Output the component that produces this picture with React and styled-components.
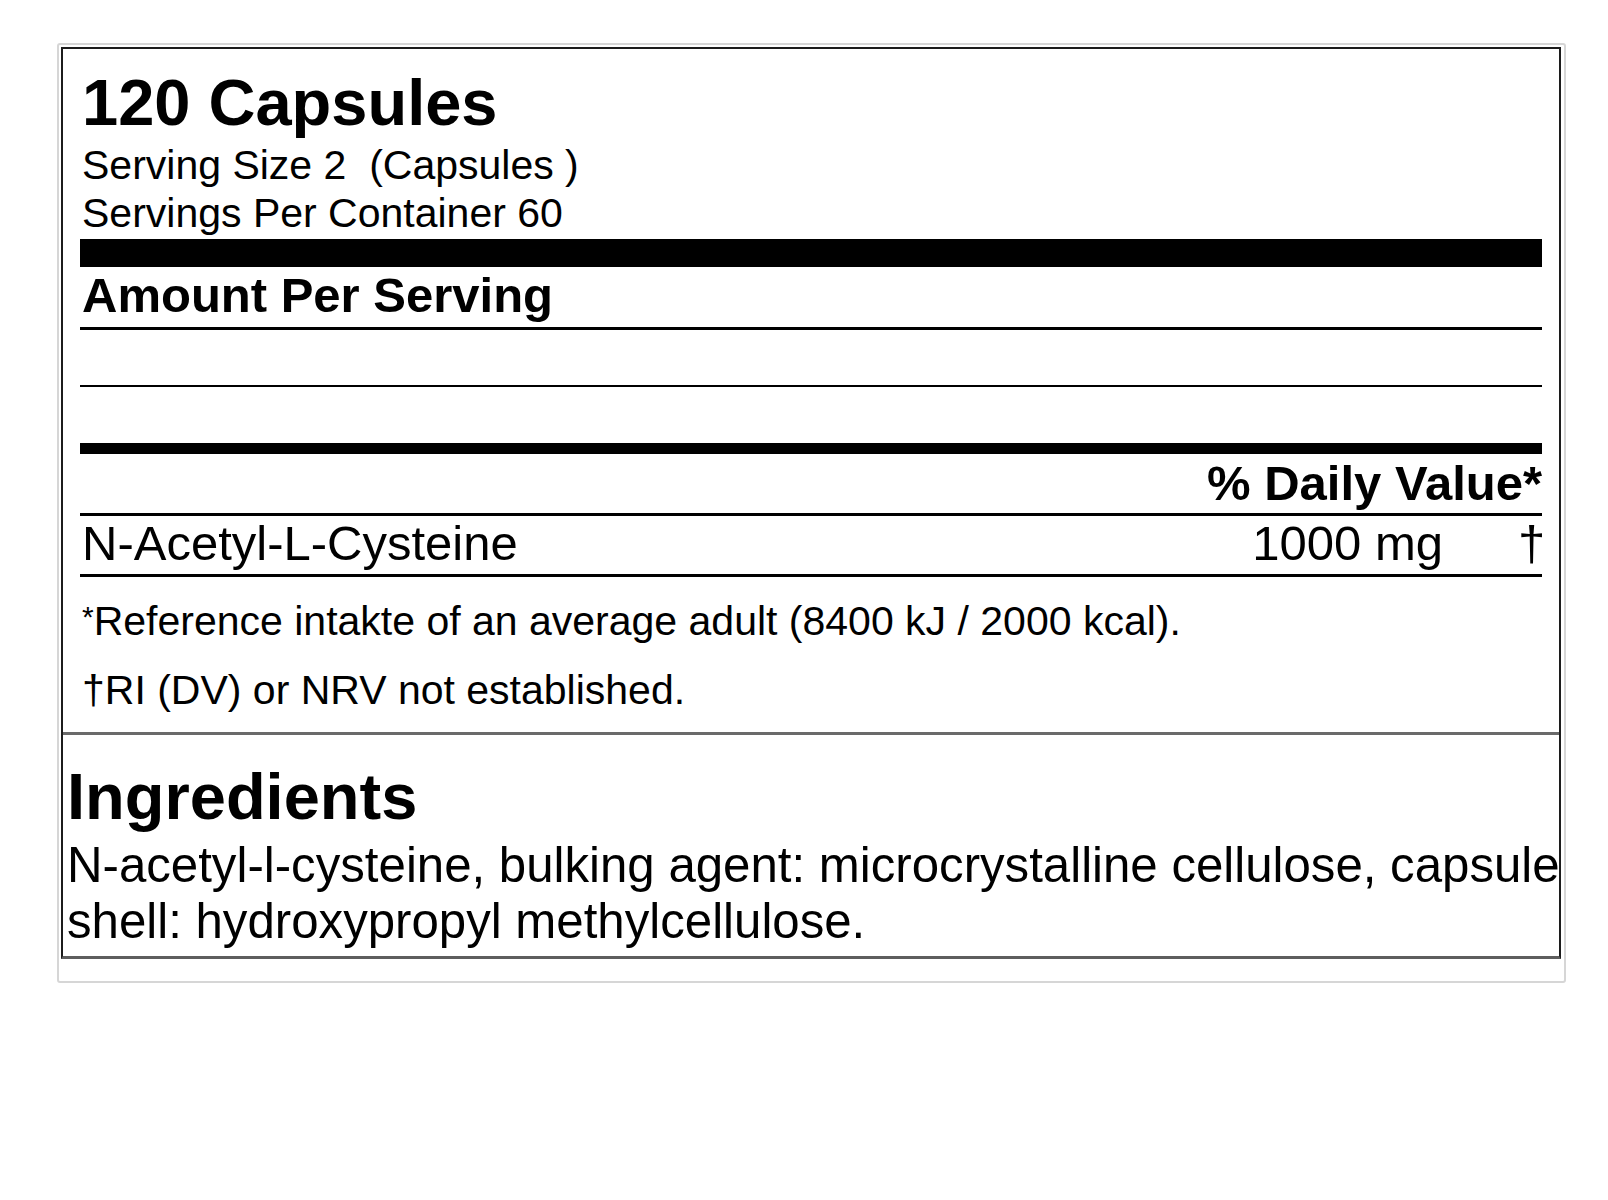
import React from 'react';
import styled, { createGlobalStyle } from 'styled-components';

const GlobalStyle = createGlobalStyle`
  html, body {
    margin: 0;
    padding: 0;
    background: #ffffff;
  }
  body {
    font-family: "Liberation Sans", Arial, sans-serif;
    color: #000;
  }
`;

const Page = styled.div`
  padding: 43px 0 0 57px;
`;

const Frame = styled.div`
  width: 1500px;
  border: 2px solid #d6d6d6;
  border-radius: 3px;
  padding: 2px 3px 22px 2px;
`;

const Label = styled.div`
  border: 2px solid #1c1c1c;
  border-bottom: 3px solid #5e5e5e;
`;

const Facts = styled.div`
  padding: 18px 17px 18px 17px;
`;

const Title = styled.div`
  font-size: 65px;
  font-weight: 700;
  line-height: 72px;
  margin-bottom: 2px;
  padding-left: 2px;
`;

const InfoLine = styled.div`
  font-size: 41px;
  line-height: 48px;
  padding-left: 2px;
  white-space: pre;
`;

const HeavyBar = styled.div`
  height: ${({ size }) => size}px;
  background: #000;
  margin-top: ${({ gap }) => gap || 0}px;
`;

const SectionHead = styled.div`
  font-size: 49px;
  font-weight: 700;
  line-height: 56px;
  padding: ${({ right }) => (right ? '1px 0 2px 0' : '0 0 4px 2px')};
  text-align: ${({ right }) => (right ? 'right' : 'left')};
  border-bottom: 3px solid #000;
`;

const EmptyRow = styled.div`
  height: ${({ h }) => h}px;
  border-bottom: ${({ rule }) => rule}px solid #000;
`;

const NutrientRow = styled.div`
  display: flex;
  align-items: baseline;
  font-size: 49px;
  line-height: 54px;
  padding: 0 0 4px 2px;
  border-bottom: 3px solid #000;
`;

const NutrientName = styled.span`
  flex: 1;
`;

const Amount = styled.span`
  margin-right: 75px;
`;

const Dagger = styled.span`
  width: 24px;
  text-align: right;
`;

const Footnote = styled.div`
  font-size: 41px;
  line-height: 48px;
  margin-top: ${({ first }) => (first ? 16 : 21)}px;
  padding-left: 2px;
`;

const Star = styled.span`
  font-size: 30px;
  vertical-align: 8px;
`;

const Ingredients = styled.div`
  border-top: 3px solid #6a6a6a;
  padding: 28px 0 7px 4px;
`;

const IngredientsTitle = styled.div`
  font-size: 65px;
  font-weight: 700;
  line-height: 68px;
  margin-bottom: 6px;
`;

const IngredientsLine = styled.div`
  font-size: 49.2px;
  line-height: 56px;
  white-space: nowrap;
`;

export default function App() {
  return (
    <Page>
      <GlobalStyle />
      <Frame>
        <Label>
          <Facts>
            <Title>120 Capsules</Title>
            <InfoLine>Serving Size 2  (Capsules )</InfoLine>
            <InfoLine>Servings Per Container 60</InfoLine>
            <HeavyBar size={28} gap={2} />
            <SectionHead>Amount Per Serving</SectionHead>
            <EmptyRow h={55} rule={2} />
            <EmptyRow h={56} rule={11} />
            <SectionHead right>% Daily Value*</SectionHead>
            <NutrientRow>
              <NutrientName>N-Acetyl-L-Cysteine</NutrientName>
              <Amount>1000 mg</Amount>
              <Dagger>†</Dagger>
            </NutrientRow>
            <Footnote first>
              <Star>*</Star>Reference intakte of an average adult (8400 kJ / 2000 kcal).
            </Footnote>
            <Footnote>†RI (DV) or NRV not established.</Footnote>
          </Facts>
          <Ingredients>
            <IngredientsTitle>Ingredients</IngredientsTitle>
            <IngredientsLine>
              N-acetyl-l-cysteine, bulking agent: microcrystalline cellulose, capsule
            </IngredientsLine>
            <IngredientsLine>shell: hydroxypropyl methylcellulose.</IngredientsLine>
          </Ingredients>
        </Label>
      </Frame>
    </Page>
  );
}
